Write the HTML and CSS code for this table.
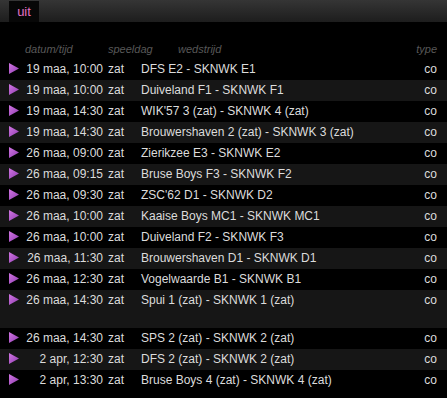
FILE: index.html
```html
<!DOCTYPE html>
<html lang="nl">
<head>
<meta charset="utf-8">
<title>uit</title>
<link rel="stylesheet" href="styles.css">
</head>
<body>
<div class="tabbar"><div class="tab">uit</div></div>
<svg width="0" height="0" class="defs"><defs><linearGradient id="pg" x1="0" y1="0" x2="1" y2="1"><stop offset="0" stop-color="#d276e4"/><stop offset="1" stop-color="#8e3cae"/></linearGradient><symbol id="play" viewBox="0 0 10 11"><polygon points="0,0 10,5.5 0,11" fill="url(#pg)"/></symbol></defs></svg>
<table class="matches">
<colgroup><col class="c-icon"><col class="c-date"><col class="c-day"><col class="c-match"><col class="c-type"></colgroup>
<thead>
<tr><th></th><th class="h-date">datum/tijd</th><th class="h-day">speeldag</th><th class="h-match">wedstrijd</th><th class="h-type">type</th></tr>
</thead>
<tbody>
<tr><td class="icon"><svg><use href="#play"/></svg></td><td class="date">19 maa, 10:00</td><td class="day">zat</td><td class="match">DFS E2 - SKNWK E1</td><td class="type">co</td></tr>
<tr class="alt"><td class="icon"><svg><use href="#play"/></svg></td><td class="date">19 maa, 10:00</td><td class="day">zat</td><td class="match">Duiveland F1 - SKNWK F1</td><td class="type">co</td></tr>
<tr><td class="icon"><svg><use href="#play"/></svg></td><td class="date">19 maa, 14:30</td><td class="day">zat</td><td class="match">WIK'57 3 (zat) - SKNWK 4 (zat)</td><td class="type">co</td></tr>
<tr class="alt"><td class="icon"><svg><use href="#play"/></svg></td><td class="date">19 maa, 14:30</td><td class="day">zat</td><td class="match">Brouwershaven 2 (zat) - SKNWK 3 (zat)</td><td class="type">co</td></tr>
<tr><td class="icon"><svg><use href="#play"/></svg></td><td class="date">26 maa, 09:00</td><td class="day">zat</td><td class="match">Zierikzee E3 - SKNWK E2</td><td class="type">co</td></tr>
<tr class="alt"><td class="icon"><svg><use href="#play"/></svg></td><td class="date">26 maa, 09:15</td><td class="day">zat</td><td class="match">Bruse Boys F3 - SKNWK F2</td><td class="type">co</td></tr>
<tr><td class="icon"><svg><use href="#play"/></svg></td><td class="date">26 maa, 09:30</td><td class="day">zat</td><td class="match">ZSC'62 D1 - SKNWK D2</td><td class="type">co</td></tr>
<tr class="alt"><td class="icon"><svg><use href="#play"/></svg></td><td class="date">26 maa, 10:00</td><td class="day">zat</td><td class="match">Kaaise Boys MC1 - SKNWK MC1</td><td class="type">co</td></tr>
<tr><td class="icon"><svg><use href="#play"/></svg></td><td class="date">26 maa, 10:00</td><td class="day">zat</td><td class="match">Duiveland F2 - SKNWK F3</td><td class="type">co</td></tr>
<tr class="alt"><td class="icon"><svg><use href="#play"/></svg></td><td class="date">26 maa, 11:30</td><td class="day">zat</td><td class="match">Brouwershaven D1 - SKNWK D1</td><td class="type">co</td></tr>
<tr><td class="icon"><svg><use href="#play"/></svg></td><td class="date">26 maa, 12:30</td><td class="day">zat</td><td class="match">Vogelwaarde B1 - SKNWK B1</td><td class="type">co</td></tr>
<tr class="alt tall"><td class="icon"><svg><use href="#play"/></svg></td><td class="date">26 maa, 14:30</td><td class="day">zat</td><td class="match">Spui 1 (zat) - SKNWK 1 (zat)</td><td class="type">co</td></tr>
<tr><td class="icon"><svg><use href="#play"/></svg></td><td class="date">26 maa, 14:30</td><td class="day">zat</td><td class="match">SPS 2 (zat) - SKNWK 2 (zat)</td><td class="type">co</td></tr>
<tr class="alt"><td class="icon"><svg><use href="#play"/></svg></td><td class="date">2 apr, 12:30</td><td class="day">zat</td><td class="match">DFS 2 (zat) - SKNWK 2 (zat)</td><td class="type">co</td></tr>
<tr><td class="icon"><svg><use href="#play"/></svg></td><td class="date">2 apr, 13:30</td><td class="day">zat</td><td class="match">Bruse Boys 4 (zat) - SKNWK 4 (zat)</td><td class="type">co</td></tr>
</tbody>
</table>
</body>
</html>
```
FILE: styles.css
```css
html, body {
  margin: 0;
  padding: 0;
  background: #000;
}
body {
  font-family: "Liberation Sans", Arial, sans-serif;
  font-size: 12px;
  color: #dcdcdc;
  overflow: hidden;
}
.defs {
  position: absolute;
  width: 0;
  height: 0;
}
.tabbar {
  height: 22px;
  background: linear-gradient(#353535, #1d1d1d);
  display: flex;
  align-items: flex-end;
  padding-left: 9px;
}
.tab {
  width: 30px;
  height: 21px;
  background: #070707;
  color: #e271c2;
  text-align: center;
  line-height: 22px;
  font-size: 13px;
}
.matches {
  margin-top: 17px;
  width: 447px;
  border-collapse: collapse;
  table-layout: fixed;
}
.c-icon { width: 22px; }
.c-date { width: 81px; }
.c-day { width: 38px; }
.c-type { width: 50px; }
th {
  font-weight: normal;
  font-style: italic;
  font-size: 11px;
  color: #585858;
  height: 20px;
  line-height: 20px;
  padding: 0;
  text-align: left;
}
.h-date { padding-left: 3px; }
.h-day { padding-left: 5px; }
.h-match { padding-left: 37px; }
.h-type { text-align: right; padding-right: 10px; }
td {
  height: 21px;
  line-height: 21px;
  padding: 0;
  white-space: nowrap;
  vertical-align: top;
}
tr.alt td { background: #161616; }
tr.tall td { height: 38px; }
td.icon svg {
  display: block;
  width: 10px;
  height: 11px;
  margin: 4px 0 0 9px;
}
td.date { text-align: right; }
td.day { padding-left: 5px; }
td.type { text-align: right; padding-right: 10px; }
```
